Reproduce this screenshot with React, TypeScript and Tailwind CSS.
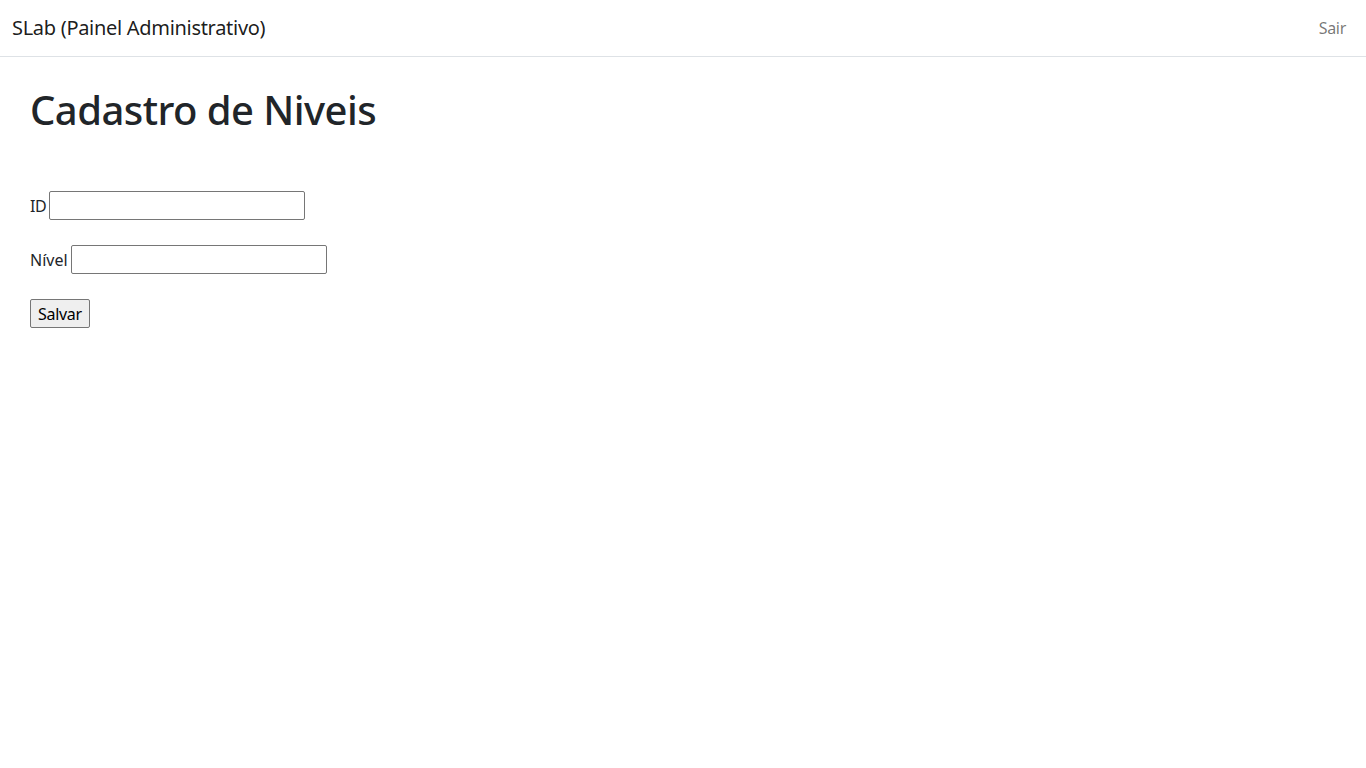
export default function App() {
  return (
    <div className="min-h-screen bg-white text-[#212529] font-['Noto_Sans',sans-serif] tracking-[-0.3px]">
      <nav className="h-[57px] border-b border-[#dee2e6] flex items-center justify-between px-3">
        <a href="#" className="text-[20px] text-black/90">
          SLab (Painel Administrativo)
        </a>
        <a href="#" className="px-2 text-[16px] text-black/55">
          Sair
        </a>
      </nav>

      <main className="px-[30px] pt-[29px]">
        <h1 className="text-[40px] font-medium leading-[1.2] tracking-[-0.55px] mb-[57px]">Cadastro de Niveis</h1>

        <form className="flex flex-col gap-[25px] text-[16px]">
          <div className="flex items-center gap-[2px]">
            <label>ID</label>
            <input type="text" className="w-[256px] h-[29px] border border-[#767676] rounded-[2px] bg-white" />
          </div>
          <div className="flex items-center gap-[3px]">
            <label className="tracking-normal">Nível</label>
            <input type="text" className="w-[256px] h-[29px] border border-[#767676] rounded-[2px] bg-white" />
          </div>
          <div>
            <button type="button" className="h-[29px] px-[7px] border border-[#767676] rounded-[2px] bg-[#efefef] text-black">
              Salvar
            </button>
          </div>
        </form>
      </main>
    </div>
  );
}
